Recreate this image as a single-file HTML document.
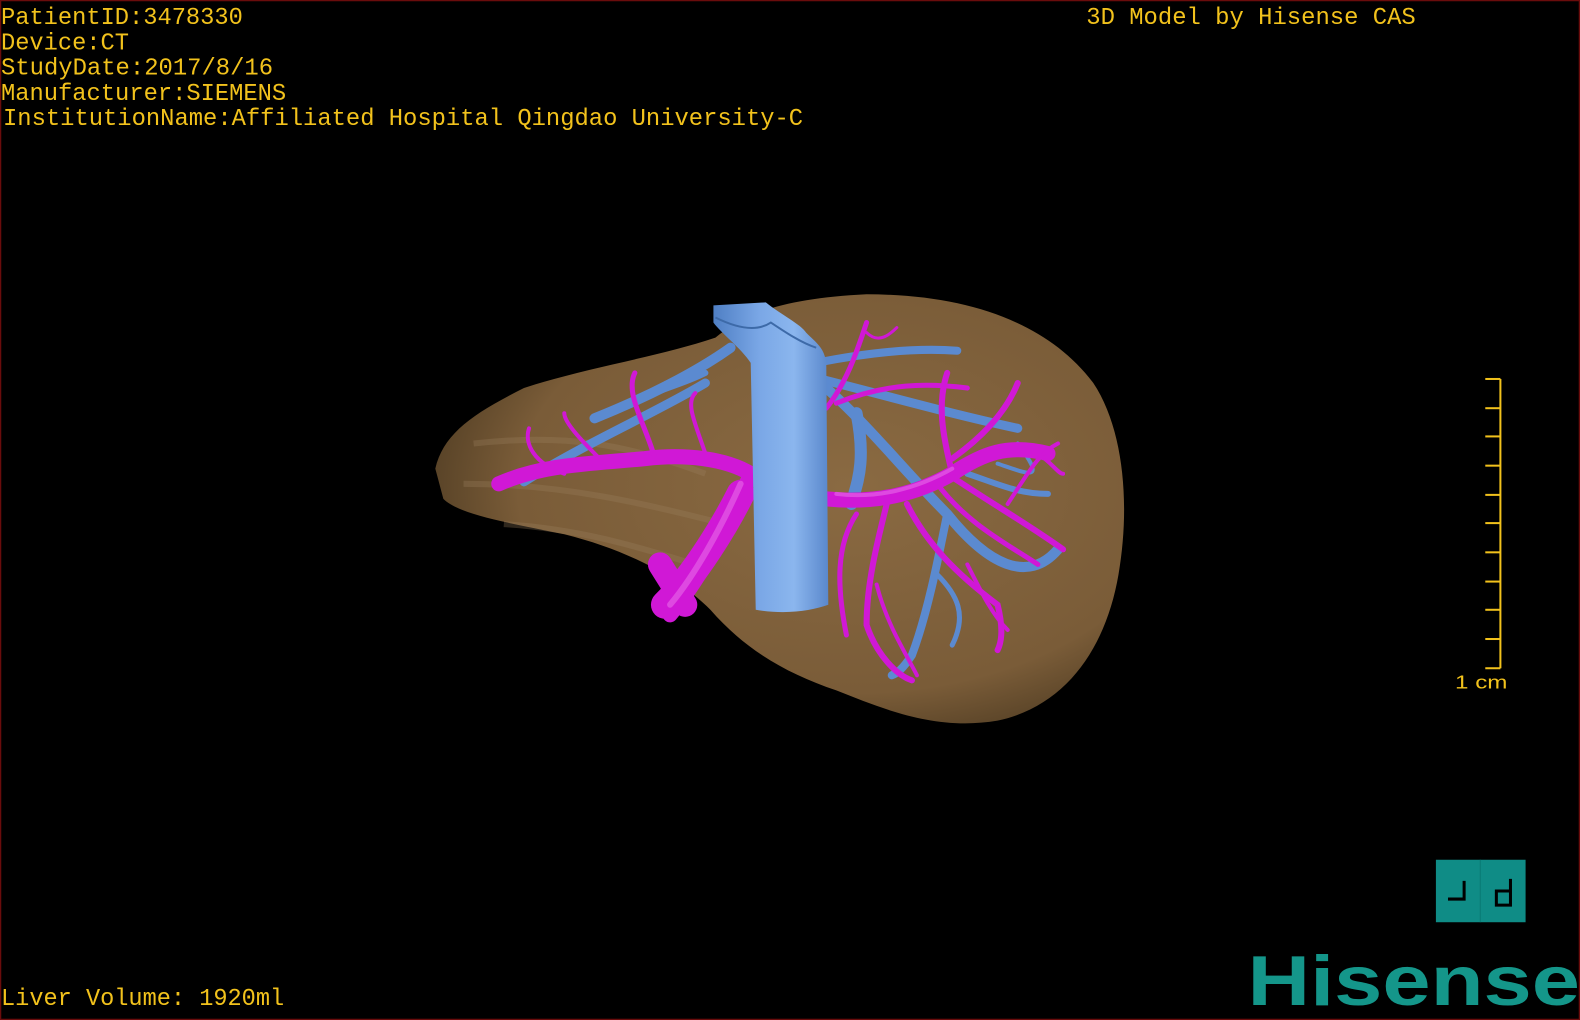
<!DOCTYPE html>
<html><head><meta charset="utf-8"><style>
html,body{margin:0;padding:0;background:#000;width:1580px;height:1020px;overflow:hidden}
svg{display:block}
</style></head><body>
<svg width="1580" height="1020" viewBox="0 0 1568 1012" preserveAspectRatio="none" xmlns="http://www.w3.org/2000/svg">
<defs>
<radialGradient id="lv" cx="0.6" cy="0.45" r="0.6">
<stop offset="0" stop-color="#8a6a42"/><stop offset="0.8" stop-color="#7a5c38"/><stop offset="1" stop-color="#5a4428"/>
</radialGradient>
<linearGradient id="ivc" x1="0" x2="1">
<stop offset="0" stop-color="#4f7fc4"/><stop offset="0.4" stop-color="#7aa7e6"/><stop offset="0.7" stop-color="#8bb6ee"/><stop offset="1" stop-color="#5a88cc"/>
</linearGradient>
</defs>
<rect width="1568" height="1012" fill="#000"/>
<rect x="0.5" y="0.5" width="1567" height="1011" fill="none" stroke="#6a0c0c" stroke-width="1.5"/>
<path d="M432,465 C440,430 470,410 520,385 C580,365 650,355 710,335 C740,310 780,296 860,292 C960,292 1040,320 1085,380 C1115,425 1122,500 1110,570 C1098,640 1060,700 990,715 C930,725 880,705 830,685 C780,668 740,645 705,605 C670,570 620,545 560,530 C500,518 455,510 440,495 Z" fill="url(#lv)"/>
<path d="M470,440 C560,430 620,440 700,470 M460,480 C560,480 640,500 720,520 M500,520 C580,525 640,545 690,560" stroke="#9a8060" stroke-width="6" fill="none" opacity="0.3"/>
<g stroke="#5b8ad0" fill="none" stroke-linecap="round">
<path d="M725,345 C690,370 640,395 590,415" stroke-width="10"/>
<path d="M700,380 C650,410 580,440 520,478" stroke-width="9"/>
<path d="M700,370 C680,380 660,385 650,390" stroke-width="6"/>
<path d="M810,360 C860,350 910,345 950,348" stroke-width="8"/>
<path d="M810,375 C870,390 940,410 1010,425" stroke-width="9"/>
<path d="M820,385 C860,420 900,470 940,510 C980,560 1020,580 1050,545" stroke-width="10"/>
<path d="M850,410 C860,460 850,480 845,500" stroke-width="12"/>
<path d="M940,510 C930,560 920,610 905,650 C895,665 890,668 885,670" stroke-width="8"/>
<path d="M930,570 C950,590 960,610 945,640" stroke-width="5"/>
<path d="M960,470 C990,480 1010,490 1040,490" stroke-width="6"/>
<path d="M990,460 C1020,470 1040,480 1010,440" stroke-width="4"/>
</g>
<g stroke="#d018d6" fill="none" stroke-linecap="round">
<path d="M665,610 C690,580 720,530 745,470 C720,455 680,450 640,455 C590,460 540,460 495,480" stroke-width="15"/>
<path d="M660,600 C690,570 720,520 735,490" stroke-width="28"/>
<path d="M655,560 L680,600" stroke-width="24"/>
<path d="M820,495 C870,500 910,490 945,470 C975,450 1000,440 1040,450" stroke-width="15"/>
<path d="M945,470 C935,430 930,400 940,370" stroke-width="6"/>
<path d="M945,455 C980,430 1000,405 1010,380" stroke-width="6"/>
<path d="M940,470 C985,500 1020,520 1055,545" stroke-width="6"/>
<path d="M880,500 C870,540 860,580 860,620 C870,650 890,670 905,675" stroke-width="6"/>
<path d="M900,500 C920,540 950,570 990,600 C995,620 995,635 990,645" stroke-width="6"/>
<path d="M930,480 C960,520 1000,540 1030,560" stroke-width="5"/>
<path d="M850,510 C830,540 830,580 840,630" stroke-width="5"/>
<path d="M820,405 C840,380 850,350 860,320" stroke-width="5"/>
<path d="M830,400 C880,380 920,380 960,385" stroke-width="5"/>
<path d="M650,455 C640,420 620,390 630,370" stroke-width="5"/>
<path d="M600,460 C580,440 560,420 560,410" stroke-width="4"/>
<path d="M700,450 C690,420 680,400 690,390" stroke-width="4"/>
<path d="M960,560 C975,590 985,610 1000,625" stroke-width="4"/>
<path d="M1000,500 C1020,470 1030,450 1050,440" stroke-width="4"/>
<path d="M560,470 C530,460 520,440 525,425" stroke-width="4"/>
<path d="M870,580 C880,620 900,650 910,670" stroke-width="4"/>
<path d="M1030,450 C1045,460 1050,470 1055,470" stroke-width="4"/>
<path d="M860,330 C870,340 880,335 890,325" stroke-width="3"/>
</g>
<g stroke="#e86ae8" fill="none" stroke-linecap="round" opacity="0.6">
<path d="M665,600 C690,570 715,525 735,480" stroke-width="6"/>
<path d="M830,490 C870,495 910,485 945,465" stroke-width="4"/>
</g>
<path d="M708,303 L760,300 C775,312 795,322 800,330 C810,340 818,345 820,360 L822,600 C805,606 780,610 750,605 L745,360 C735,345 715,330 708,320 Z" fill="url(#ivc)"/>
<path d="M710,315 C730,325 750,330 765,320 C780,330 795,340 810,345" stroke="#3d6aa8" stroke-width="2" fill="none"/>
<g font-family="'Liberation Mono',monospace" font-size="24" fill="#f2c21c">
<text x="1" y="24" textLength="240" lengthAdjust="spacingAndGlyphs">PatientID:3478330</text>
<text x="1" y="49" textLength="127" lengthAdjust="spacingAndGlyphs">Device:CT</text>
<text x="1" y="74" textLength="270" lengthAdjust="spacingAndGlyphs">StudyDate:2017/8/16</text>
<text x="1" y="99" textLength="283" lengthAdjust="spacingAndGlyphs">Manufacturer:SIEMENS</text>
<text x="3" y="124" textLength="794" lengthAdjust="spacingAndGlyphs">InstitutionName:Affiliated Hospital Qingdao University-C</text>
<text x="1078" y="24" textLength="327" lengthAdjust="spacingAndGlyphs">3D Model by Hisense CAS</text>
<text x="1" y="997" textLength="281" lengthAdjust="spacingAndGlyphs">Liver Volume: 1920ml</text>
</g>
<g stroke="#f2c21c" stroke-width="2">
<line x1="1489" y1="376" x2="1489" y2="663"/>
<line x1="1474" y1="376" x2="1489" y2="376"/><line x1="1474" y1="405" x2="1489" y2="405"/>
<line x1="1474" y1="433" x2="1489" y2="433"/><line x1="1474" y1="462" x2="1489" y2="462"/>
<line x1="1474" y1="491" x2="1489" y2="491"/><line x1="1474" y1="519" x2="1489" y2="519"/>
<line x1="1474" y1="548" x2="1489" y2="548"/><line x1="1474" y1="577" x2="1489" y2="577"/>
<line x1="1474" y1="605" x2="1489" y2="605"/><line x1="1474" y1="634" x2="1489" y2="634"/>
<line x1="1474" y1="663" x2="1489" y2="663"/>
</g>
<text x="1444" y="683" font-family="'Liberation Sans',sans-serif" font-size="18" fill="#f2c21c" textLength="52" lengthAdjust="spacingAndGlyphs">1 cm</text>
<rect x="1425" y="853" width="89" height="62" fill="#0f8c86"/>
<line x1="1469" y1="853" x2="1469" y2="915" stroke="#0a7a74" stroke-width="1"/>
<path d="M1437,892 L1453,892 L1453,874" stroke="#000" stroke-width="3" fill="none"/>
<path d="M1499,872 L1499,898 L1485,898 L1485,884 L1499,884" stroke="#000" stroke-width="3" fill="none"/>
<text x="1238" y="997" font-family="'Liberation Sans',sans-serif" font-weight="bold" font-size="70" fill="#14968a" textLength="330" lengthAdjust="spacingAndGlyphs">Hisense</text>
</svg>
</body></html>
